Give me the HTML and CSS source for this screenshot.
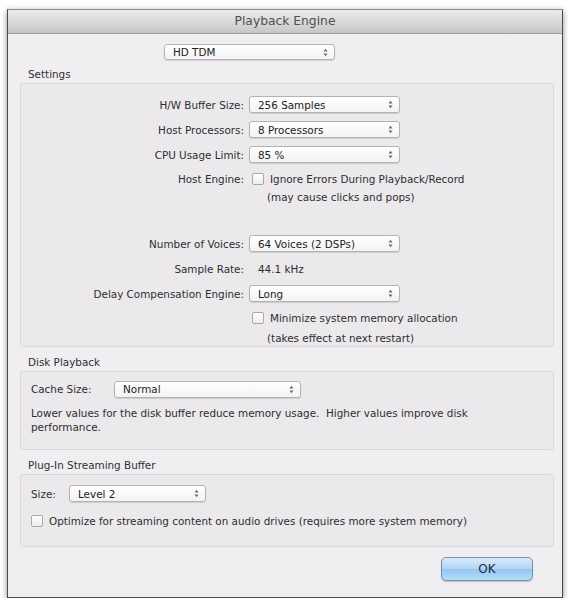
FILE: index.html
```html
<!DOCTYPE html>
<html lang="en">
<head>
  <meta charset="UTF-8" />
  <title>Playback Engine</title>
  <link rel="stylesheet" href="styles.css">
</head>
<body>
  <div class="window">
    <div class="titlebar">Playback Engine</div>

    <div class="content">
      <div class="popup engine-popup">
        <span>HD TDM</span>
        <svg class="arrows" width="5" height="9" viewBox="0 0 5 9"><path d="M0.5 3.6L2.5 0.8L4.5 3.6Z M0.5 5.4L2.5 8.2L4.5 5.4Z"/></svg>
      </div>

      <!-- Settings -->
      <div class="group-title first">Settings</div>
      <div class="group settings">
        <div class="row">
          <span class="label">H/W Buffer Size:</span>
          <div class="popup">
            <span>256 Samples</span>
            <svg class="arrows" width="5" height="9" viewBox="0 0 5 9"><path d="M0.5 3.6L2.5 0.8L4.5 3.6Z M0.5 5.4L2.5 8.2L4.5 5.4Z"/></svg>
          </div>
        </div>
        <div class="row">
          <span class="label">Host Processors:</span>
          <div class="popup">
            <span>8 Processors</span>
            <svg class="arrows" width="5" height="9" viewBox="0 0 5 9"><path d="M0.5 3.6L2.5 0.8L4.5 3.6Z M0.5 5.4L2.5 8.2L4.5 5.4Z"/></svg>
          </div>
        </div>
        <div class="row">
          <span class="label">CPU Usage Limit:</span>
          <div class="popup">
            <span>85 %</span>
            <svg class="arrows" width="5" height="9" viewBox="0 0 5 9"><path d="M0.5 3.6L2.5 0.8L4.5 3.6Z M0.5 5.4L2.5 8.2L4.5 5.4Z"/></svg>
          </div>
        </div>
        <div class="row check-row">
          <span class="label">Host Engine:</span>
          <label class="check"><span class="box"></span>Ignore Errors During Playback/Record</label>
        </div>
        <div class="row note-row">
          <span></span>
          <span class="note">(may cause clicks and pops)</span>
        </div>

        <div class="row voices-row">
          <span class="label">Number of Voices:</span>
          <div class="popup">
            <span>64 Voices (2 DSPs)</span>
            <svg class="arrows" width="5" height="9" viewBox="0 0 5 9"><path d="M0.5 3.6L2.5 0.8L4.5 3.6Z M0.5 5.4L2.5 8.2L4.5 5.4Z"/></svg>
          </div>
        </div>
        <div class="row">
          <span class="label">Sample Rate:</span>
          <span class="value">44.1 kHz</span>
        </div>
        <div class="row">
          <span class="label">Delay Compensation Engine:</span>
          <div class="popup">
            <span>Long</span>
            <svg class="arrows" width="5" height="9" viewBox="0 0 5 9"><path d="M0.5 3.6L2.5 0.8L4.5 3.6Z M0.5 5.4L2.5 8.2L4.5 5.4Z"/></svg>
          </div>
        </div>
        <div class="row check-row">
          <span></span>
          <label class="check"><span class="box"></span>Minimize system memory allocation</label>
        </div>
        <div class="row last-note">
          <span></span>
          <span class="note">(takes effect at next restart)</span>
        </div>
      </div>

      <!-- Disk Playback -->
      <div class="group-title">Disk Playback</div>
      <div class="group disk">
        <div class="inline-row">
          <span class="cache-label">Cache Size:</span>
          <div class="popup cache-popup">
            <span>Normal</span>
            <svg class="arrows" width="5" height="9" viewBox="0 0 5 9"><path d="M0.5 3.6L2.5 0.8L4.5 3.6Z M0.5 5.4L2.5 8.2L4.5 5.4Z"/></svg>
          </div>
        </div>
        <p class="hint">Lower values for the disk buffer reduce memory usage.&nbsp; Higher values improve disk<br>performance.</p>
      </div>

      <!-- Plug-In Streaming Buffer -->
      <div class="group-title">Plug-In Streaming Buffer</div>
      <div class="group streaming">
        <div class="inline-row">
          <span class="size-label">Size:</span>
          <div class="popup size-popup">
            <span>Level 2</span>
            <svg class="arrows" width="5" height="9" viewBox="0 0 5 9"><path d="M0.5 3.6L2.5 0.8L4.5 3.6Z M0.5 5.4L2.5 8.2L4.5 5.4Z"/></svg>
          </div>
        </div>
        <label class="check optimize"><span class="box"></span>Optimize for streaming content on audio drives (requires more system memory)</label>
      </div>

      <div class="buttons">
        <button class="ok">OK</button>
      </div>
    </div>
  </div>
</body>
</html>
```

FILE: styles.css
```css
body {
  margin: 0;
  background-color: #ffffff;
  font-family: "DejaVu Sans", sans-serif;
  font-size: 10.4px;
  color: #2e2e31;
}

.window {
  margin: 9px 0 0 7px;
  width: 556px;
  height: 589px;
  box-sizing: border-box;
  border: 1px solid #4a4a4c;
  border-top-color: #8a8a8c;
  background-color: #f0eef1;
  box-shadow: 0 2px 6px rgba(0,0,0,0.45);
}

.titlebar {
  height: 23px;
  line-height: 23px;
  text-align: center;
  font-size: 12.3px;
  color: #504f54;
  background: linear-gradient(#ebebeb, #d6d6d6 60%, #c6c6c6);
  border-bottom: 1px solid #9c9c9e;
}

.content {
  padding: 10px 8px 0 12px;
}

/* popup menus */
.popup {
  display: flex;
  align-items: center;
  justify-content: space-between;
  height: 17px;
  box-sizing: border-box;
  padding: 0 6px 0 8px;
  border: 1px solid #b4b2b7;
  border-radius: 3px;
  background: linear-gradient(#ffffff, #f3f3f4);
  box-shadow: 0 1px 1px rgba(0,0,0,0.12);
  color: #222;
}

.arrows {
  fill: #6a6a6e;
}

.engine-popup {
  margin-left: 144px;
  width: 171px;
  height: 16px;
}

.group-title {
  margin: 9px 0 3px 8px;
  height: 12px;
  line-height: 12px;
}

.group-title.first {
  margin-top: 8px;
}

.group {
  width: 534px;
  box-sizing: border-box;
  border: 1px solid #dad8dc;
  border-radius: 3px;
  background-color: #ebe9ec;
}

/* settings grid */
.settings {
  padding-top: 8px;
}

.row {
  display: grid;
  grid-template-columns: 223px 151px;
  column-gap: 5px;
  align-items: center;
  height: 25px;
}

.label {
  text-align: right;
  white-space: nowrap;
}

.check-row {
  height: 24px;
}

.note-row {
  height: 12px;
}

.voices-row {
  margin-top: 28px;
}

.last-note {
  height: 16px;
}

.value {
  padding-left: 9px;
}

.note {
  padding-left: 18px;
  white-space: nowrap;
}

.check {
  display: flex;
  align-items: center;
  white-space: nowrap;
}

.box {
  width: 12px;
  height: 12px;
  box-sizing: border-box;
  margin: 0 6px 0 3px;
  border: 1px solid #a9a7ac;
  border-radius: 2px;
  background: linear-gradient(#ffffff, #ececee);
  flex-shrink: 0;
}

/* disk playback */
.disk {
  padding: 5px 10px 15px;
}

.inline-row {
  display: flex;
  align-items: center;
  height: 24px;
}

.cache-label {
  width: 83px;
}

.cache-popup {
  width: 187px;
}

.hint {
  margin: 5px 0 0;
  line-height: 14px;
}

/* streaming buffer */
.streaming {
  padding: 6px 10px 14px;
}

.streaming .inline-row {
  height: 25px;
}

.size-label {
  width: 38px;
}

.size-popup {
  width: 137px;
}

.optimize {
  margin-top: 4px;
  height: 22px;
}

.optimize .box {
  margin-left: 0;
}

.buttons {
  display: flex;
  justify-content: flex-end;
  padding: 10px 21px 0 0;
}

.ok {
  width: 92px;
  height: 24px;
  border: 1px solid #7491b4;
  border-radius: 5px;
  background: linear-gradient(#d9ecfb, #afd4f5 50%, #94c5f1 51%, #b5dcf9);
  box-shadow: 0 1px 1px rgba(0,0,0,0.2);
  font-family: "DejaVu Sans", sans-serif;
  font-size: 12px;
  color: #1f2a36;
  cursor: pointer;
}
```
